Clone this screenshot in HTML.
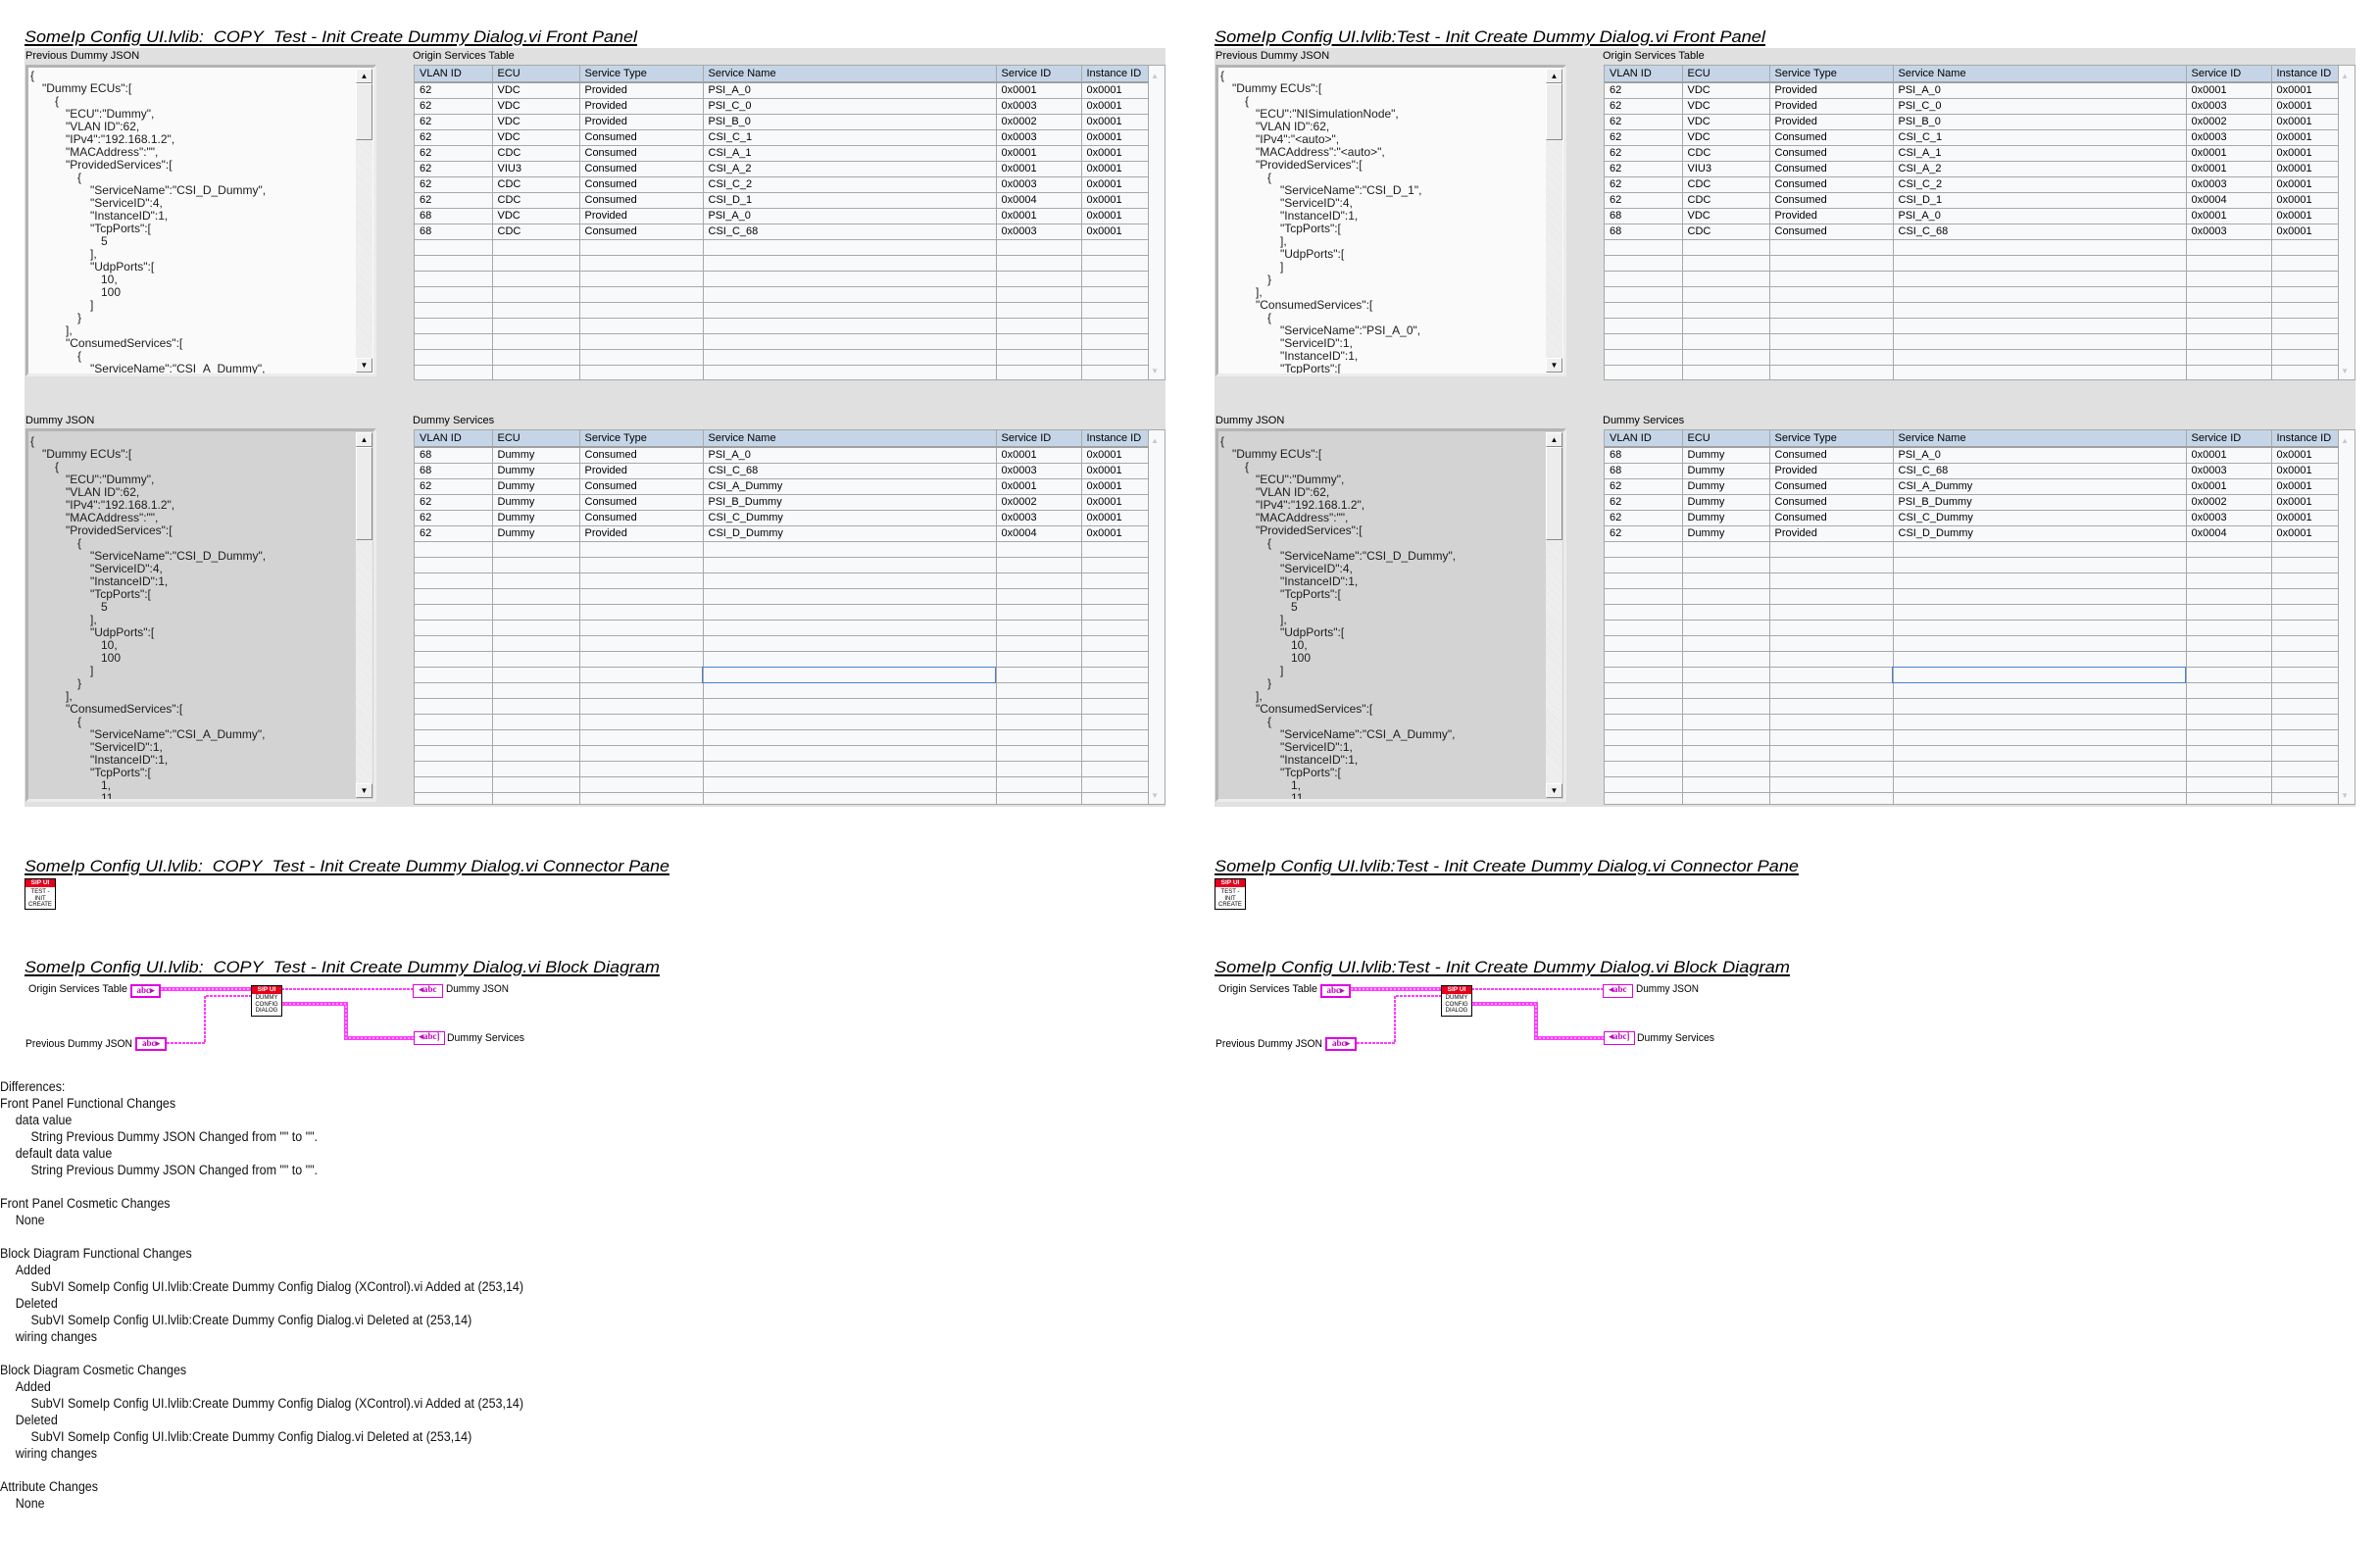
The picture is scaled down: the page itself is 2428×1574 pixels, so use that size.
<!DOCTYPE html>
<html><head><meta charset="utf-8">
<style>
*{margin:0;padding:0;box-sizing:border-box}
body{width:2428px;height:1574px;background:#fff;position:relative;overflow:hidden;font-family:"Liberation Sans",sans-serif;color:#000}
.half{position:absolute;top:0;width:1214px;height:1574px}
.abs{position:absolute}
.fit{display:inline-block;white-space:nowrap;transform-origin:0 0}
.t{position:absolute;left:25px;font-size:17px;line-height:17px;font-style:italic;text-decoration:underline;text-decoration-thickness:2px;text-underline-offset:2px;white-space:nowrap}
.panel{position:absolute;left:25px;top:49px;width:1164px;height:774px;background:#e0e0e0}
.lbl{position:absolute;font-size:11px;line-height:13px;white-space:nowrap}
.json{position:absolute;left:26px;width:358px;border:3px solid #ececec;border-top-color:#b4b4b4;border-left-color:#b4b4b4;overflow:hidden;font-size:12px;line-height:13px;color:#1c1c1c}
.json .c{position:absolute;left:0;top:0;right:20px;white-space:nowrap}
.json .c div{height:13px}
.i0{padding-left:2px}.i1{padding-left:14px}.i2{padding-left:27px}.i3{padding-left:38px}.i4{padding-left:50px}.i5{padding-left:63px}.i6{padding-left:74px}
.sb{position:absolute;right:1px;top:1px;bottom:1px;width:17px;background:#efefef;background-image:repeating-linear-gradient(45deg,#f4f4f4 0 1px,#e6e6e6 1px 2px)}
.sb .b{position:absolute;left:0;width:17px;height:15px;background:#f0f0f0;border:1px solid #fff;border-right-color:#888;border-bottom-color:#888;font-size:8px;line-height:13px;text-align:center;color:#000}
.sb .th{position:absolute;left:0;width:17px;top:15px;height:58px;background:#ececec;border:1px solid #fff;border-right-color:#888;border-bottom-color:#888}
.tw{position:absolute;left:422px;width:767px;border:1px solid #a8a8a8;background:#f8f9fb;overflow:hidden}
.tw table{border-collapse:collapse;table-layout:fixed;width:748px;font-size:11px}
.tw th{height:17px;background:#c5d5e7;font-weight:normal;text-align:left;padding:0 0 0 5px;border-right:1px solid #a8a8a8;border-bottom:2px solid #a0a0a0;white-space:nowrap;overflow:hidden}
.tw td{height:16px;line-height:15px;padding:0 0 0 5px;border-right:1px solid #a8a8a8;border-bottom:1px solid #a8a8a8;white-space:nowrap;overflow:hidden}
.tw .ar{position:absolute;right:6px;font-size:8px;color:#c8c8c8}
.sel{position:absolute;border:1px solid #4a7fd0}
.ico{position:absolute;width:32px;height:32px;border:1px solid #000;background:#fff;font-size:6px;line-height:6.5px;text-align:center;overflow:hidden}
.ico .r{background:#e8001c;color:#fff;height:8px;line-height:8px;font-size:6.5px;font-weight:bold}
.term{position:absolute;border:2px solid #e000e0;background:#fff;color:#c000c0;font-family:"Liberation Serif",serif;font-weight:bold;font-size:9px;line-height:9px;text-align:center}
.dl{position:absolute;font-size:11px;line-height:13px;white-space:nowrap}
.diff{position:absolute;left:0;top:1100px;font-size:13.5px;line-height:17px;color:#111}
.diff div{height:17px;white-space:nowrap}
.d1{padding-left:17px}.d2{padding-left:34px}
</style></head><body>

<!-- ================= LEFT HALF ================= -->
<div class="half" style="left:0">
<div class="t fit" style="top:29px;--w:625px">SomeIp Config UI.lvlib:&nbsp; COPY&nbsp; Test - Init Create Dummy Dialog.vi Front Panel</div>
<div class="panel"></div>
<div class="lbl" style="left:26px;top:51px">Previous Dummy JSON</div>
<div class="lbl" style="left:421px;top:51px">Origin Services Table</div>
<div class="lbl" style="left:26px;top:423px">Dummy JSON</div>
<div class="lbl" style="left:421px;top:423px">Dummy Services</div>

<div class="json" style="top:66px;height:318px;background:#fafafa">
<div class="c" style="top:2px">
<div class="i0">{</div><div class="i1">"Dummy ECUs":[</div><div class="i2">{</div>
<div class="i3">"ECU":"Dummy",</div><div class="i3">"VLAN ID":62,</div><div class="i3">"IPv4":"192.168.1.2",</div><div class="i3">"MACAddress":"",</div><div class="i3">"ProvidedServices":[</div>
<div class="i4">{</div><div class="i5">"ServiceName":"CSI_D_Dummy",</div><div class="i5">"ServiceID":4,</div><div class="i5">"InstanceID":1,</div><div class="i5">"TcpPorts":[</div><div class="i6">5</div><div class="i5">],</div><div class="i5">"UdpPorts":[</div><div class="i6">10,</div><div class="i6">100</div><div class="i5">]</div><div class="i4">}</div>
<div class="i3">],</div><div class="i3">"ConsumedServices":[</div><div class="i4">{</div><div class="i5">"ServiceName":"CSI_A_Dummy",</div>
</div>
<div class="sb"><div class="b" style="top:0">&#9650;</div><div class="th"></div><div class="b" style="bottom:0">&#9660;</div></div>
</div>

<div class="json" style="top:437px;height:381px;background:#d3d3d3">
<div class="c" style="top:4px">
<div class="i0">{</div><div class="i1">"Dummy ECUs":[</div><div class="i2">{</div>
<div class="i3">"ECU":"Dummy",</div><div class="i3">"VLAN ID":62,</div><div class="i3">"IPv4":"192.168.1.2",</div><div class="i3">"MACAddress":"",</div><div class="i3">"ProvidedServices":[</div>
<div class="i4">{</div><div class="i5">"ServiceName":"CSI_D_Dummy",</div><div class="i5">"ServiceID":4,</div><div class="i5">"InstanceID":1,</div><div class="i5">"TcpPorts":[</div><div class="i6">5</div><div class="i5">],</div><div class="i5">"UdpPorts":[</div><div class="i6">10,</div><div class="i6">100</div><div class="i5">]</div><div class="i4">}</div>
<div class="i3">],</div><div class="i3">"ConsumedServices":[</div><div class="i4">{</div><div class="i5">"ServiceName":"CSI_A_Dummy",</div><div class="i5">"ServiceID":1,</div><div class="i5">"InstanceID":1,</div><div class="i5">"TcpPorts":[</div><div class="i6">1,</div><div class="i6">11</div>
</div>
<div class="sb"><div class="b" style="top:0">&#9650;</div><div class="th" style="height:95px"></div><div class="b" style="bottom:0">&#9660;</div></div>
</div>

<div class="tw" style="top:66px;height:322px">
<table><colgroup><col style="width:79px"><col style="width:89px"><col style="width:126px"><col style="width:299px"><col style="width:87px"><col style="width:68px"></colgroup>
<tr><th>VLAN ID</th><th>ECU</th><th>Service Type</th><th>Service Name</th><th>Service ID</th><th>Instance ID</th></tr>
<tr><td>62</td><td>VDC</td><td>Provided</td><td>PSI_A_0</td><td>0x0001</td><td>0x0001</td></tr>
<tr><td>62</td><td>VDC</td><td>Provided</td><td>PSI_C_0</td><td>0x0003</td><td>0x0001</td></tr>
<tr><td>62</td><td>VDC</td><td>Provided</td><td>PSI_B_0</td><td>0x0002</td><td>0x0001</td></tr>
<tr><td>62</td><td>VDC</td><td>Consumed</td><td>CSI_C_1</td><td>0x0003</td><td>0x0001</td></tr>
<tr><td>62</td><td>CDC</td><td>Consumed</td><td>CSI_A_1</td><td>0x0001</td><td>0x0001</td></tr>
<tr><td>62</td><td>VIU3</td><td>Consumed</td><td>CSI_A_2</td><td>0x0001</td><td>0x0001</td></tr>
<tr><td>62</td><td>CDC</td><td>Consumed</td><td>CSI_C_2</td><td>0x0003</td><td>0x0001</td></tr>
<tr><td>62</td><td>CDC</td><td>Consumed</td><td>CSI_D_1</td><td>0x0004</td><td>0x0001</td></tr>
<tr><td>68</td><td>VDC</td><td>Provided</td><td>PSI_A_0</td><td>0x0001</td><td>0x0001</td></tr>
<tr><td>68</td><td>CDC</td><td>Consumed</td><td>CSI_C_68</td><td>0x0003</td><td>0x0001</td></tr>
<tr><td></td><td></td><td></td><td></td><td></td><td></td></tr>
<tr><td></td><td></td><td></td><td></td><td></td><td></td></tr>
<tr><td></td><td></td><td></td><td></td><td></td><td></td></tr>
<tr><td></td><td></td><td></td><td></td><td></td><td></td></tr>
<tr><td></td><td></td><td></td><td></td><td></td><td></td></tr>
<tr><td></td><td></td><td></td><td></td><td></td><td></td></tr>
<tr><td></td><td></td><td></td><td></td><td></td><td></td></tr>
<tr><td></td><td></td><td></td><td></td><td></td><td></td></tr>
<tr><td></td><td></td><td></td><td></td><td></td><td></td></tr>
</table>
<div class="ar" style="top:6px">&#9650;</div><div class="ar" style="bottom:4px">&#9660;</div>
</div>

<div class="tw" style="top:438px;height:383px">
<table><colgroup><col style="width:79px"><col style="width:89px"><col style="width:126px"><col style="width:299px"><col style="width:87px"><col style="width:68px"></colgroup>
<tr><th>VLAN ID</th><th>ECU</th><th>Service Type</th><th>Service Name</th><th>Service ID</th><th>Instance ID</th></tr>
<tr><td>68</td><td>Dummy</td><td>Consumed</td><td>PSI_A_0</td><td>0x0001</td><td>0x0001</td></tr>
<tr><td>68</td><td>Dummy</td><td>Provided</td><td>CSI_C_68</td><td>0x0003</td><td>0x0001</td></tr>
<tr><td>62</td><td>Dummy</td><td>Consumed</td><td>CSI_A_Dummy</td><td>0x0001</td><td>0x0001</td></tr>
<tr><td>62</td><td>Dummy</td><td>Consumed</td><td>PSI_B_Dummy</td><td>0x0002</td><td>0x0001</td></tr>
<tr><td>62</td><td>Dummy</td><td>Consumed</td><td>CSI_C_Dummy</td><td>0x0003</td><td>0x0001</td></tr>
<tr><td>62</td><td>Dummy</td><td>Provided</td><td>CSI_D_Dummy</td><td>0x0004</td><td>0x0001</td></tr>
<tr><td></td><td></td><td></td><td></td><td></td><td></td></tr>
<tr><td></td><td></td><td></td><td></td><td></td><td></td></tr>
<tr><td></td><td></td><td></td><td></td><td></td><td></td></tr>
<tr><td></td><td></td><td></td><td></td><td></td><td></td></tr>
<tr><td></td><td></td><td></td><td></td><td></td><td></td></tr>
<tr><td></td><td></td><td></td><td></td><td></td><td></td></tr>
<tr><td></td><td></td><td></td><td></td><td></td><td></td></tr>
<tr><td></td><td></td><td></td><td></td><td></td><td></td></tr>
<tr><td></td><td></td><td></td><td></td><td></td><td></td></tr>
<tr><td></td><td></td><td></td><td></td><td></td><td></td></tr>
<tr><td></td><td></td><td></td><td></td><td></td><td></td></tr>
<tr><td></td><td></td><td></td><td></td><td></td><td></td></tr>
<tr><td></td><td></td><td></td><td></td><td></td><td></td></tr>
<tr><td></td><td></td><td></td><td></td><td></td><td></td></tr>
<tr><td></td><td></td><td></td><td></td><td></td><td></td></tr>
<tr><td></td><td></td><td></td><td></td><td></td><td></td></tr>
<tr><td></td><td></td><td></td><td></td><td></td><td></td></tr>
</table>
<div class="ar" style="top:6px">&#9650;</div><div class="ar" style="bottom:4px">&#9660;</div>
</div>
<div class="sel" style="left:716px;top:680px;width:300px;height:17px"></div>

<div class="t fit" style="top:875px;--w:658px">SomeIp Config UI.lvlib:&nbsp; COPY&nbsp; Test - Init Create Dummy Dialog.vi Connector Pane</div>
<div class="ico" style="left:25px;top:896px"><div class="r">SIP UI</div><div style="margin-top:2px">TEST -<br>INIT<br>CREATE</div></div>

<div class="t fit" style="top:978px;--w:648px">SomeIp Config UI.lvlib:&nbsp; COPY&nbsp; Test - Init Create Dummy Dialog.vi Block Diagram</div>
<svg class="abs" style="left:0;top:995px" width="480" height="90" viewBox="0 995 480 90">
<path d="M164 1009H256" stroke="#ff3cff" stroke-width="4" fill="none"/>
<path d="M164 1009H256" stroke="#fff" stroke-width="1" stroke-dasharray="2 2" fill="none"/>
<path d="M170 1064H209V1016H256" stroke="#ff3cff" stroke-width="2" fill="none" stroke-dasharray="3 1"/>
<path d="M287 1009H421" stroke="#ff3cff" stroke-width="2" fill="none" stroke-dasharray="3 1"/>
<path d="M287 1024H353V1059H422" stroke="#ff3cff" stroke-width="4" fill="none"/>
<path d="M287 1024H353V1059H422" stroke="#fff" stroke-width="1" stroke-dasharray="2 2" fill="none"/>
</svg>
<div class="dl fit" style="left:29px;top:1003px;--w:101px">Origin Services Table</div>
<div class="term" style="left:133px;top:1004px;width:31px;height:14px">abc&#9656;</div>
<div class="ico" style="left:256px;top:1005px"><div class="r">SIP UI</div><div style="margin-top:1px">DUMMY<br>CONFIG<br>DIALOG</div></div>
<div class="term" style="left:421px;top:1004px;width:31px;height:14px;border-width:1px">&#9666;abc</div>
<div class="dl fit" style="left:455px;top:1003px;--w:64px">Dummy JSON</div>
<div class="dl fit" style="left:26px;top:1059px;--w:109px">Previous Dummy JSON</div>
<div class="term" style="left:138px;top:1058px;width:32px;height:14px">abc&#9656;</div>
<div class="term" style="left:422px;top:1052px;width:32px;height:14px;border-width:1px">&#9666;abc]</div>
<div class="dl fit" style="left:456px;top:1053px;--w:79px">Dummy Services</div>
</div>

<!-- ================= RIGHT HALF ================= -->
<div class="half" style="left:1214px">
<div class="t fit" style="top:29px;--w:562px">SomeIp Config UI.lvlib:Test - Init Create Dummy Dialog.vi Front Panel</div>
<div class="panel"></div>
<div class="lbl" style="left:26px;top:51px">Previous Dummy JSON</div>
<div class="lbl" style="left:421px;top:51px">Origin Services Table</div>
<div class="lbl" style="left:26px;top:423px">Dummy JSON</div>
<div class="lbl" style="left:421px;top:423px">Dummy Services</div>

<div class="json" style="top:66px;height:318px;background:#fafafa">
<div class="c" style="top:2px">
<div class="i0">{</div><div class="i1">"Dummy ECUs":[</div><div class="i2">{</div>
<div class="i3">"ECU":"NISimulationNode",</div><div class="i3">"VLAN ID":62,</div><div class="i3">"IPv4":"&lt;auto&gt;",</div><div class="i3">"MACAddress":"&lt;auto&gt;",</div><div class="i3">"ProvidedServices":[</div>
<div class="i4">{</div><div class="i5">"ServiceName":"CSI_D_1",</div><div class="i5">"ServiceID":4,</div><div class="i5">"InstanceID":1,</div><div class="i5">"TcpPorts":[</div><div class="i5">],</div><div class="i5">"UdpPorts":[</div><div class="i5">]</div><div class="i4">}</div>
<div class="i3">],</div><div class="i3">"ConsumedServices":[</div><div class="i4">{</div><div class="i5">"ServiceName":"PSI_A_0",</div><div class="i5">"ServiceID":1,</div><div class="i5">"InstanceID":1,</div><div class="i5">"TcpPorts":[</div>
</div>
<div class="sb"><div class="b" style="top:0">&#9650;</div><div class="th"></div><div class="b" style="bottom:0">&#9660;</div></div>
</div>

<div class="json" style="top:437px;height:381px;background:#d3d3d3">
<div class="c" style="top:4px">
<div class="i0">{</div><div class="i1">"Dummy ECUs":[</div><div class="i2">{</div>
<div class="i3">"ECU":"Dummy",</div><div class="i3">"VLAN ID":62,</div><div class="i3">"IPv4":"192.168.1.2",</div><div class="i3">"MACAddress":"",</div><div class="i3">"ProvidedServices":[</div>
<div class="i4">{</div><div class="i5">"ServiceName":"CSI_D_Dummy",</div><div class="i5">"ServiceID":4,</div><div class="i5">"InstanceID":1,</div><div class="i5">"TcpPorts":[</div><div class="i6">5</div><div class="i5">],</div><div class="i5">"UdpPorts":[</div><div class="i6">10,</div><div class="i6">100</div><div class="i5">]</div><div class="i4">}</div>
<div class="i3">],</div><div class="i3">"ConsumedServices":[</div><div class="i4">{</div><div class="i5">"ServiceName":"CSI_A_Dummy",</div><div class="i5">"ServiceID":1,</div><div class="i5">"InstanceID":1,</div><div class="i5">"TcpPorts":[</div><div class="i6">1,</div><div class="i6">11</div>
</div>
<div class="sb"><div class="b" style="top:0">&#9650;</div><div class="th" style="height:95px"></div><div class="b" style="bottom:0">&#9660;</div></div>
</div>

<div class="tw" style="top:66px;height:322px">
<table><colgroup><col style="width:79px"><col style="width:89px"><col style="width:126px"><col style="width:299px"><col style="width:87px"><col style="width:68px"></colgroup>
<tr><th>VLAN ID</th><th>ECU</th><th>Service Type</th><th>Service Name</th><th>Service ID</th><th>Instance ID</th></tr>
<tr><td>62</td><td>VDC</td><td>Provided</td><td>PSI_A_0</td><td>0x0001</td><td>0x0001</td></tr>
<tr><td>62</td><td>VDC</td><td>Provided</td><td>PSI_C_0</td><td>0x0003</td><td>0x0001</td></tr>
<tr><td>62</td><td>VDC</td><td>Provided</td><td>PSI_B_0</td><td>0x0002</td><td>0x0001</td></tr>
<tr><td>62</td><td>VDC</td><td>Consumed</td><td>CSI_C_1</td><td>0x0003</td><td>0x0001</td></tr>
<tr><td>62</td><td>CDC</td><td>Consumed</td><td>CSI_A_1</td><td>0x0001</td><td>0x0001</td></tr>
<tr><td>62</td><td>VIU3</td><td>Consumed</td><td>CSI_A_2</td><td>0x0001</td><td>0x0001</td></tr>
<tr><td>62</td><td>CDC</td><td>Consumed</td><td>CSI_C_2</td><td>0x0003</td><td>0x0001</td></tr>
<tr><td>62</td><td>CDC</td><td>Consumed</td><td>CSI_D_1</td><td>0x0004</td><td>0x0001</td></tr>
<tr><td>68</td><td>VDC</td><td>Provided</td><td>PSI_A_0</td><td>0x0001</td><td>0x0001</td></tr>
<tr><td>68</td><td>CDC</td><td>Consumed</td><td>CSI_C_68</td><td>0x0003</td><td>0x0001</td></tr>
<tr><td></td><td></td><td></td><td></td><td></td><td></td></tr>
<tr><td></td><td></td><td></td><td></td><td></td><td></td></tr>
<tr><td></td><td></td><td></td><td></td><td></td><td></td></tr>
<tr><td></td><td></td><td></td><td></td><td></td><td></td></tr>
<tr><td></td><td></td><td></td><td></td><td></td><td></td></tr>
<tr><td></td><td></td><td></td><td></td><td></td><td></td></tr>
<tr><td></td><td></td><td></td><td></td><td></td><td></td></tr>
<tr><td></td><td></td><td></td><td></td><td></td><td></td></tr>
<tr><td></td><td></td><td></td><td></td><td></td><td></td></tr>
</table>
<div class="ar" style="top:6px">&#9650;</div><div class="ar" style="bottom:4px">&#9660;</div>
</div>

<div class="tw" style="top:438px;height:383px">
<table><colgroup><col style="width:79px"><col style="width:89px"><col style="width:126px"><col style="width:299px"><col style="width:87px"><col style="width:68px"></colgroup>
<tr><th>VLAN ID</th><th>ECU</th><th>Service Type</th><th>Service Name</th><th>Service ID</th><th>Instance ID</th></tr>
<tr><td>68</td><td>Dummy</td><td>Consumed</td><td>PSI_A_0</td><td>0x0001</td><td>0x0001</td></tr>
<tr><td>68</td><td>Dummy</td><td>Provided</td><td>CSI_C_68</td><td>0x0003</td><td>0x0001</td></tr>
<tr><td>62</td><td>Dummy</td><td>Consumed</td><td>CSI_A_Dummy</td><td>0x0001</td><td>0x0001</td></tr>
<tr><td>62</td><td>Dummy</td><td>Consumed</td><td>PSI_B_Dummy</td><td>0x0002</td><td>0x0001</td></tr>
<tr><td>62</td><td>Dummy</td><td>Consumed</td><td>CSI_C_Dummy</td><td>0x0003</td><td>0x0001</td></tr>
<tr><td>62</td><td>Dummy</td><td>Provided</td><td>CSI_D_Dummy</td><td>0x0004</td><td>0x0001</td></tr>
<tr><td></td><td></td><td></td><td></td><td></td><td></td></tr>
<tr><td></td><td></td><td></td><td></td><td></td><td></td></tr>
<tr><td></td><td></td><td></td><td></td><td></td><td></td></tr>
<tr><td></td><td></td><td></td><td></td><td></td><td></td></tr>
<tr><td></td><td></td><td></td><td></td><td></td><td></td></tr>
<tr><td></td><td></td><td></td><td></td><td></td><td></td></tr>
<tr><td></td><td></td><td></td><td></td><td></td><td></td></tr>
<tr><td></td><td></td><td></td><td></td><td></td><td></td></tr>
<tr><td></td><td></td><td></td><td></td><td></td><td></td></tr>
<tr><td></td><td></td><td></td><td></td><td></td><td></td></tr>
<tr><td></td><td></td><td></td><td></td><td></td><td></td></tr>
<tr><td></td><td></td><td></td><td></td><td></td><td></td></tr>
<tr><td></td><td></td><td></td><td></td><td></td><td></td></tr>
<tr><td></td><td></td><td></td><td></td><td></td><td></td></tr>
<tr><td></td><td></td><td></td><td></td><td></td><td></td></tr>
<tr><td></td><td></td><td></td><td></td><td></td><td></td></tr>
<tr><td></td><td></td><td></td><td></td><td></td><td></td></tr>
</table>
<div class="ar" style="top:6px">&#9650;</div><div class="ar" style="bottom:4px">&#9660;</div>
</div>
<div class="sel" style="left:716px;top:680px;width:300px;height:17px"></div>

<div class="t fit" style="top:875px;--w:596px">SomeIp Config UI.lvlib:Test - Init Create Dummy Dialog.vi Connector Pane</div>
<div class="ico" style="left:25px;top:896px"><div class="r">SIP UI</div><div style="margin-top:2px">TEST -<br>INIT<br>CREATE</div></div>

<div class="t fit" style="top:978px;--w:587px">SomeIp Config UI.lvlib:Test - Init Create Dummy Dialog.vi Block Diagram</div>
<svg class="abs" style="left:0;top:995px" width="480" height="90" viewBox="0 995 480 90">
<path d="M164 1009H256" stroke="#ff3cff" stroke-width="4" fill="none"/>
<path d="M164 1009H256" stroke="#fff" stroke-width="1" stroke-dasharray="2 2" fill="none"/>
<path d="M170 1064H209V1016H256" stroke="#ff3cff" stroke-width="2" fill="none" stroke-dasharray="3 1"/>
<path d="M287 1009H421" stroke="#ff3cff" stroke-width="2" fill="none" stroke-dasharray="3 1"/>
<path d="M287 1024H353V1059H422" stroke="#ff3cff" stroke-width="4" fill="none"/>
<path d="M287 1024H353V1059H422" stroke="#fff" stroke-width="1" stroke-dasharray="2 2" fill="none"/>
</svg>
<div class="dl fit" style="left:29px;top:1003px;--w:101px">Origin Services Table</div>
<div class="term" style="left:133px;top:1004px;width:31px;height:14px">abc&#9656;</div>
<div class="ico" style="left:256px;top:1005px"><div class="r">SIP UI</div><div style="margin-top:1px">DUMMY<br>CONFIG<br>DIALOG</div></div>
<div class="term" style="left:421px;top:1004px;width:31px;height:14px;border-width:1px">&#9666;abc</div>
<div class="dl fit" style="left:455px;top:1003px;--w:64px">Dummy JSON</div>
<div class="dl fit" style="left:26px;top:1059px;--w:109px">Previous Dummy JSON</div>
<div class="term" style="left:138px;top:1058px;width:32px;height:14px">abc&#9656;</div>
<div class="term" style="left:422px;top:1052px;width:32px;height:14px;border-width:1px">&#9666;abc]</div>
<div class="dl fit" style="left:456px;top:1053px;--w:79px">Dummy Services</div>
</div>

<!-- ================= DIFFERENCES ================= -->
<div class="diff fit" style="--w:534px">
<div>Differences:</div>
<div>Front Panel Functional Changes</div>
<div class="d1">data value</div>
<div class="d2">String Previous Dummy JSON Changed from "" to "".</div>
<div class="d1">default data value</div>
<div class="d2">String Previous Dummy JSON Changed from "" to "".</div>
<div></div>
<div>Front Panel Cosmetic Changes</div>
<div class="d1">None</div>
<div></div>
<div>Block Diagram Functional Changes</div>
<div class="d1">Added</div>
<div class="d2">SubVI SomeIp Config UI.lvlib:Create Dummy Config Dialog (XControl).vi Added at (253,14)</div>
<div class="d1">Deleted</div>
<div class="d2">SubVI SomeIp Config UI.lvlib:Create Dummy Config Dialog.vi Deleted at (253,14)</div>
<div class="d1">wiring changes</div>
<div></div>
<div>Block Diagram Cosmetic Changes</div>
<div class="d1">Added</div>
<div class="d2">SubVI SomeIp Config UI.lvlib:Create Dummy Config Dialog (XControl).vi Added at (253,14)</div>
<div class="d1">Deleted</div>
<div class="d2">SubVI SomeIp Config UI.lvlib:Create Dummy Config Dialog.vi Deleted at (253,14)</div>
<div class="d1">wiring changes</div>
<div></div>
<div>Attribute Changes</div>
<div class="d1">None</div>
</div>

<script>
document.querySelectorAll('.fit').forEach(function(e){
  var w=parseFloat(e.style.getPropertyValue('--w'));
  var r=e.getBoundingClientRect().width;
  if(w&&r>0){e.style.transform='scaleX('+(w/r)+')';}
});
</script>
</body></html>
